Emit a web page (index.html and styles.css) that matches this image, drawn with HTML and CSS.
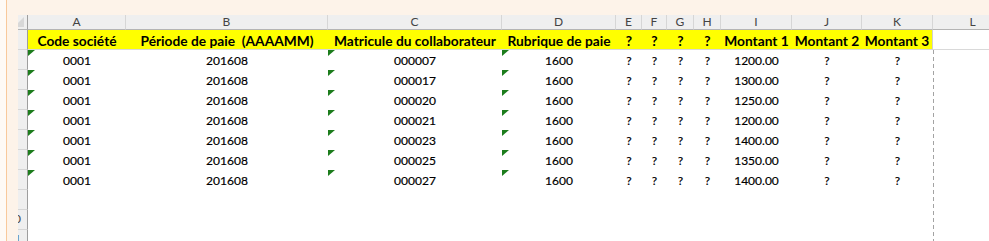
FILE: index.html
```html
<!DOCTYPE html>
<html lang="fr">
<head>
<meta charset="utf-8">
<title>Feuille</title>
<link rel="stylesheet" href="styles.css">
</head>
<body>
<div class="app">
  <div class="edge"></div>
  <div class="main">
    <div class="topband"></div>
    <div class="body">
      <div class="side"></div>
      <div class="viewport">
        <div class="sheet">
          <div class="ch corner"></div>
          <div class="ch">A</div><div class="ch">B</div><div class="ch">C</div><div class="ch">D</div><div class="ch">E</div><div class="ch">F</div><div class="ch">G</div><div class="ch">H</div><div class="ch">I</div><div class="ch">J</div><div class="ch">K</div><div class="ch">L</div>

          <div class="rh r1">1</div>
          <div class="hd">Code société</div><div class="hd pre">Période de paie  (AAAAMM)</div><div class="hd">Matricule du collaborateur</div><div class="hd">Rubrique de paie</div><div class="hd">?</div><div class="hd">?</div><div class="hd">?</div><div class="hd">?</div><div class="hd">Montant 1</div><div class="hd">Montant 2</div><div class="hd last">Montant 3</div><div class="hd-empty"></div>

          <div class="rh">2</div>
          <div class="c t">0001</div><div class="c">201608</div><div class="c t">000007</div><div class="c t">1600</div><div class="c">?</div><div class="c">?</div><div class="c">?</div><div class="c">?</div><div class="c">1200.00</div><div class="c">?</div><div class="c">?</div><div class="c"></div>

          <div class="rh">3</div>
          <div class="c t">0001</div><div class="c">201608</div><div class="c t">000017</div><div class="c t">1600</div><div class="c">?</div><div class="c">?</div><div class="c">?</div><div class="c">?</div><div class="c">1300.00</div><div class="c">?</div><div class="c">?</div><div class="c"></div>

          <div class="rh">4</div>
          <div class="c t">0001</div><div class="c">201608</div><div class="c t">000020</div><div class="c t">1600</div><div class="c">?</div><div class="c">?</div><div class="c">?</div><div class="c">?</div><div class="c">1250.00</div><div class="c">?</div><div class="c">?</div><div class="c"></div>

          <div class="rh">5</div>
          <div class="c t">0001</div><div class="c">201608</div><div class="c t">000021</div><div class="c t">1600</div><div class="c">?</div><div class="c">?</div><div class="c">?</div><div class="c">?</div><div class="c">1200.00</div><div class="c">?</div><div class="c">?</div><div class="c"></div>

          <div class="rh">6</div>
          <div class="c t">0001</div><div class="c">201608</div><div class="c t">000023</div><div class="c t">1600</div><div class="c">?</div><div class="c">?</div><div class="c">?</div><div class="c">?</div><div class="c">1400.00</div><div class="c">?</div><div class="c">?</div><div class="c"></div>

          <div class="rh">7</div>
          <div class="c t">0001</div><div class="c">201608</div><div class="c t">000025</div><div class="c t">1600</div><div class="c">?</div><div class="c">?</div><div class="c">?</div><div class="c">?</div><div class="c">1350.00</div><div class="c">?</div><div class="c">?</div><div class="c"></div>

          <div class="rh">8</div>
          <div class="c t">0001</div><div class="c">201608</div><div class="c t">000027</div><div class="c t">1600</div><div class="c">?</div><div class="c">?</div><div class="c">?</div><div class="c">?</div><div class="c">1400.00</div><div class="c">?</div><div class="c">?</div><div class="c"></div>

          <div class="rh">9</div>
          <div class="c"></div><div class="c"></div><div class="c"></div><div class="c"></div><div class="c"></div><div class="c"></div><div class="c"></div><div class="c"></div><div class="c"></div><div class="c"></div><div class="c"></div><div class="c"></div>

          <div class="rh">10</div>
          <div class="c"></div><div class="c"></div><div class="c"></div><div class="c"></div><div class="c"></div><div class="c"></div><div class="c"></div><div class="c"></div><div class="c"></div><div class="c"></div><div class="c"></div><div class="c"></div>

          <div class="rh">11</div>
          <div class="c"></div><div class="c"></div><div class="c"></div><div class="c"></div><div class="c"></div><div class="c"></div><div class="c"></div><div class="c"></div><div class="c"></div><div class="c"></div><div class="c"></div><div class="c"></div>

          <div class="pagebreak"></div>
        </div>
      </div>
    </div>
  </div>
</div>
</body>
</html>
```
FILE: styles.css
```css
* { box-sizing: border-box; }
html, body { margin: 0; padding: 0; background: #ffffff; }
body { font-family: "Lato", "Liberation Sans", sans-serif; }

.app {
  display: flex;
  width: 989px;
  height: 241px;
  overflow: hidden;
}
.edge {
  width: 7px;
  flex: 0 0 7px;
  background: #fefaf6;
  border-right: 1px solid #f8c99c;
}
.main {
  flex: 1;
  min-width: 0;
  display: flex;
  flex-direction: column;
}
.topband {
  height: 15px;
  flex: 0 0 15px;
  background: #fdf3e9;
}
.body {
  flex: 1;
  min-height: 0;
  display: flex;
}
.side {
  width: 11px;
  flex: 0 0 11px;
  background: #fdf3e9;
}
.viewport {
  flex: 1;
  min-width: 0;
  overflow: hidden;
  background: #ffffff;
}
.sheet {
  position: relative;
  display: grid;
  margin-left: -17px;
  width: 1012px;
  grid-template-columns: 27px 98px 202px 174px 114px 26px 25px 27px 27px 71px 70px 71px 80px;
  grid-template-rows: 15px;
  grid-auto-rows: 20px;
}

/* column headers */
.ch {
  background: #efefef;
  border-right: 1px solid #d6d6d6;
  border-bottom: 1px solid #b4b4b4;
  color: #444444;
  font-size: 12px;
  line-height: 14px;
  display: flex;
  align-items: flex-start;
  justify-content: center;
}
.ch.corner {
  position: relative;
  border-right-color: #9e9e9e;
}
.ch.corner::after {
  content: "";
  position: absolute;
  right: 3px;
  bottom: 2px;
  width: 10px;
  height: 10px;
  background: #d8d8d8;
  clip-path: polygon(100% 0, 100% 100%, 0 100%);
}

/* row headers */
.rh {
  background: #efefef;
  border-right: 1px solid #9e9e9e;
  border-bottom: 1px solid #d6d6d6;
  color: #444444;
  font-size: 12px;
  line-height: 14px;
  display: flex;
  align-items: flex-end;
  justify-content: center;
  padding-bottom: 3px;
}

/* title row */
.hd {
  background: #ffff00;
  border-bottom: 1px solid #d9d9d9;
  color: #000000;
  font-weight: 700;
  font-size: 13.75px;
  line-height: 17px;
  display: flex;
  align-items: flex-end;
  justify-content: center;
  white-space: nowrap;
}
.hd.pre { white-space: pre; }
.hd.last { border-right: 1px solid #d0d0d0; }
.hd-empty {
  background: #ffffff;
  border-bottom: 1px solid #d9d9d9;
}

/* data cells */
.c {
  position: relative;
  color: #000000;
  font-size: 12px;
  line-height: 14px;
  display: flex;
  align-items: flex-end;
  justify-content: center;
  padding-bottom: 2px;
  white-space: nowrap;
  -webkit-text-stroke: 0.2px #000000;
}
.c.t::before {
  content: "";
  position: absolute;
  left: 0;
  top: 0;
  width: 7px;
  height: 6px;
  background: #1c7c1c;
  clip-path: polygon(0 0, 100% 0, 0 100%);
}

/* page break indicator after column K */
.pagebreak {
  position: absolute;
  grid-column: 12 / 13;
  grid-row: 3 / 13;
  right: -1px;
  top: 0;
  bottom: 0;
  width: 1px;
  background: repeating-linear-gradient(to bottom, #a3a3a3 0 4px, transparent 4px 7px);
}
```
